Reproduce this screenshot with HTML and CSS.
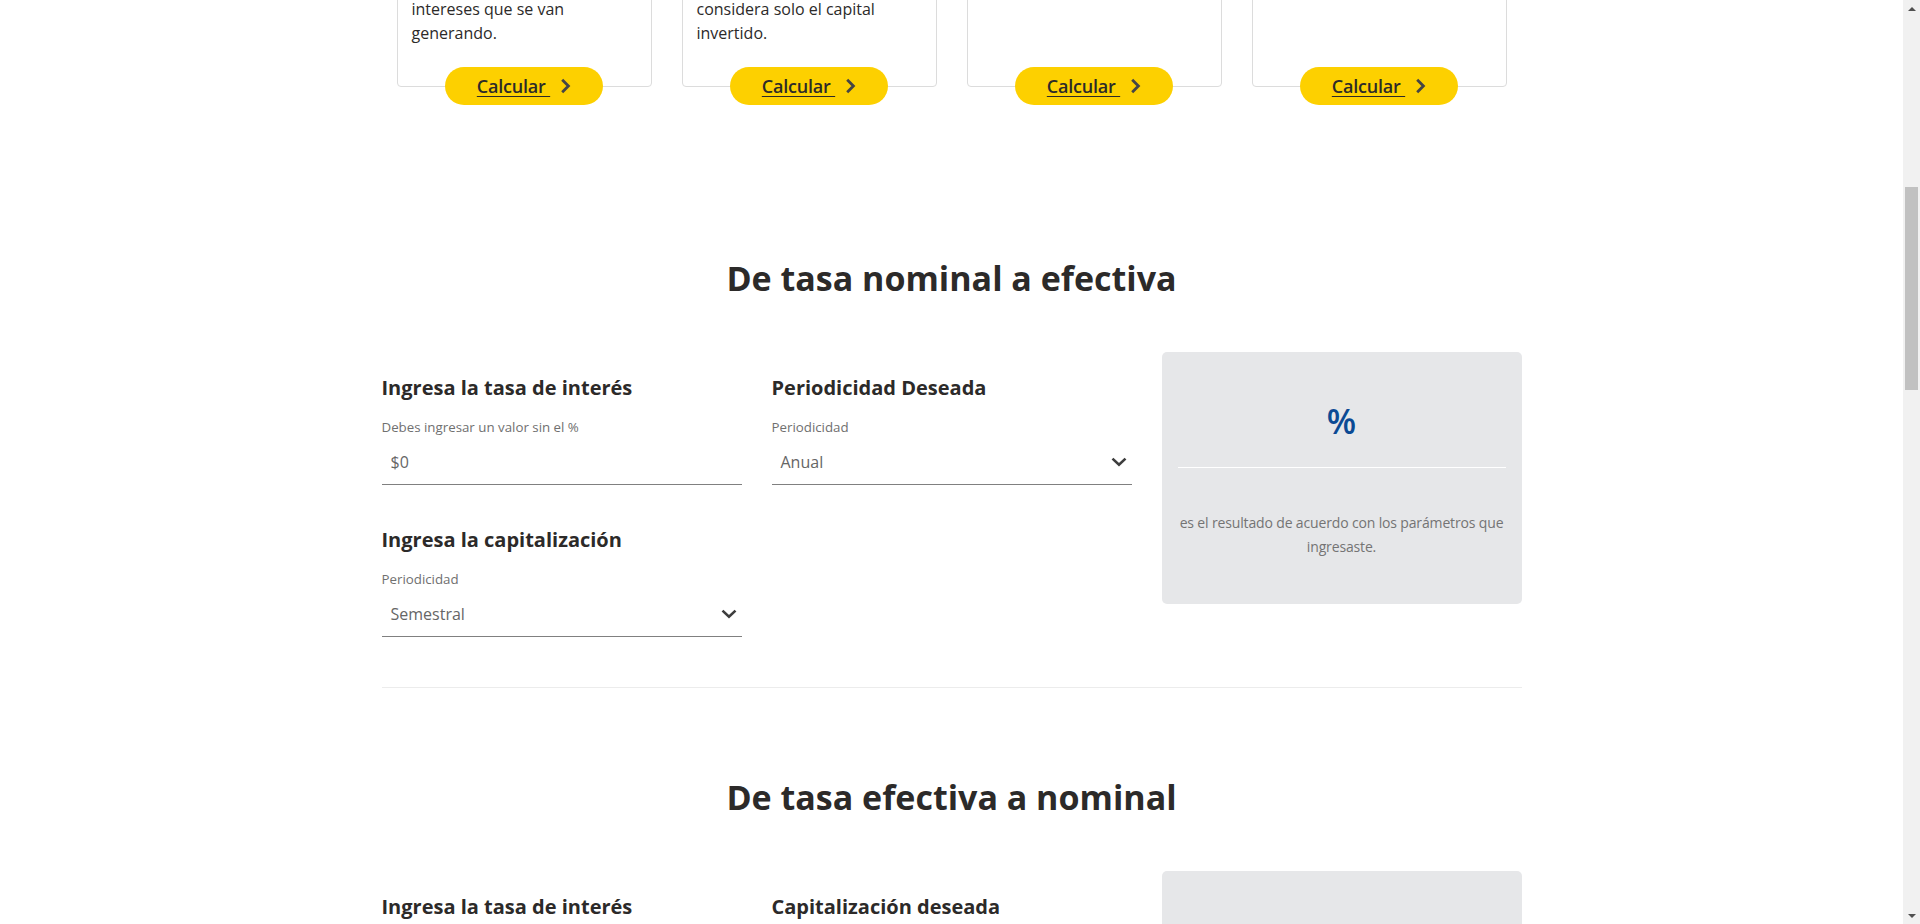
FILE: index.html
```html
<!DOCTYPE html>
<html lang="es">
<head>
<meta charset="utf-8">
<title>Calculadora de tasas</title>
<link rel="stylesheet" href="styles.css">
</head>
<body>
<div class="viewport">
  <main class="page">
    <section class="cards">
      <div class="card-item">
        <div class="card">
          <svg class="card-icon" width="40" height="40" viewBox="0 0 40 40"><circle cx="20" cy="20" r="16" fill="none" stroke="#2c2a29" stroke-width="2"/></svg>
          <h3 class="card-title">Interés compuesto</h3>
          <p class="card-text">Calcula el valor final de<br>tu inversión teniendo en<br>cuenta que se suman los<br>intereses que se van<br>generando.</p>
        </div>
        <a class="btn-calc" href="#"><span class="btn-label">Calcular&nbsp;</span><svg width="11" height="16" viewBox="0 0 11 16"><path d="M2.2 1.8L8.4 8l-6.2 6.2" fill="none" stroke="#454545" stroke-width="2.8"/></svg></a>
      </div>
      <div class="card-item">
        <div class="card">
          <svg class="card-icon" width="40" height="40" viewBox="0 0 40 40"><rect x="6" y="6" width="28" height="28" rx="3" fill="none" stroke="#2c2a29" stroke-width="2"/></svg>
          <h3 class="card-title">Interés simple</h3>
          <p class="card-text">Calcula el valor final de<br>tu inversión, este tipo<br>de interés solo<br>considera solo el capital<br>invertido.</p>
        </div>
        <a class="btn-calc" href="#"><span class="btn-label">Calcular&nbsp;</span><svg width="11" height="16" viewBox="0 0 11 16"><path d="M2.2 1.8L8.4 8l-6.2 6.2" fill="none" stroke="#454545" stroke-width="2.8"/></svg></a>
      </div>
      <div class="card-item">
        <div class="card">
          <svg class="card-icon" width="40" height="40" viewBox="0 0 40 40"><path d="M6 34V6h28" fill="none" stroke="#2c2a29" stroke-width="2"/></svg>
          <h3 class="card-title">Tasa nominal</h3>
          <p class="card-text">Convierte una tasa<br>nominal en efectiva<br>fácilmente.</p>
        </div>
        <a class="btn-calc" href="#"><span class="btn-label">Calcular&nbsp;</span><svg width="11" height="16" viewBox="0 0 11 16"><path d="M2.2 1.8L8.4 8l-6.2 6.2" fill="none" stroke="#454545" stroke-width="2.8"/></svg></a>
      </div>
      <div class="card-item">
        <div class="card">
          <svg class="card-icon" width="40" height="40" viewBox="0 0 40 40"><path d="M6 30l10-10 8 6 10-14" fill="none" stroke="#2c2a29" stroke-width="2"/></svg>
          <h3 class="card-title">Tasa efectiva</h3>
          <p class="card-text">Convierte una tasa<br>efectiva en nominal<br>fácilmente.</p>
        </div>
        <a class="btn-calc" href="#"><span class="btn-label">Calcular&nbsp;</span><svg width="11" height="16" viewBox="0 0 11 16"><path d="M2.2 1.8L8.4 8l-6.2 6.2" fill="none" stroke="#454545" stroke-width="2.8"/></svg></a>
      </div>
    </section>

    <section class="calc calc-divided">
      <h2 class="calc-title">De tasa nominal a efectiva</h2>
      <div class="calc-grid">
        <div class="calc-col">
          <div class="field">
            <h4 class="field-title">Ingresa la tasa de interés</h4>
            <div class="field-label">Debes ingresar un valor sin el %</div>
            <div class="field-input">$0</div>
          </div>
          <div class="field">
            <h4 class="field-title">Ingresa la capitalización</h4>
            <div class="field-label">Periodicidad</div>
            <div class="field-input field-select"><span>Semestral</span><svg width="16" height="10" viewBox="0 0 16 10"><path d="M1.5 1.6L8 7.8l6.5-6.2" fill="none" stroke="#3d3d3d" stroke-width="2.6"/></svg></div>
          </div>
        </div>
        <div class="calc-col">
          <div class="field">
            <h4 class="field-title">Periodicidad Deseada</h4>
            <div class="field-label">Periodicidad</div>
            <div class="field-input field-select"><span>Anual</span><svg width="16" height="10" viewBox="0 0 16 10"><path d="M1.5 1.6L8 7.8l6.5-6.2" fill="none" stroke="#3d3d3d" stroke-width="2.6"/></svg></div>
          </div>
        </div>
        <div class="result">
          <div class="result-value">%</div>
          <div class="result-rule"></div>
          <p class="result-text">es el resultado de acuerdo con los parámetros que ingresaste.</p>
        </div>
      </div>
    </section>

    <section class="calc">
      <h2 class="calc-title">De tasa efectiva a nominal</h2>
      <div class="calc-grid">
        <div class="calc-col">
          <div class="field">
            <h4 class="field-title">Ingresa la tasa de interés</h4>
            <div class="field-label">Debes ingresar un valor sin el %</div>
            <div class="field-input">$0</div>
          </div>
        </div>
        <div class="calc-col">
          <div class="field">
            <h4 class="field-title">Capitalización deseada</h4>
            <div class="field-label">Periodicidad</div>
            <div class="field-input field-select"><span>Mensual</span><svg width="16" height="10" viewBox="0 0 16 10"><path d="M1.5 1.6L8 7.8l6.5-6.2" fill="none" stroke="#3d3d3d" stroke-width="2.6"/></svg></div>
          </div>
        </div>
        <div class="result">
          <div class="result-value">%</div>
          <div class="result-rule"></div>
          <p class="result-text">es el resultado de acuerdo con los parámetros que ingresaste.</p>
        </div>
      </div>
    </section>
  </main>

  <div class="scrollbar">
    <div class="sb-btn"><span class="sb-arrow-up"></span></div>
    <div class="sb-track"><div class="sb-thumb"></div></div>
    <div class="sb-btn"><span class="sb-arrow-down"></span></div>
  </div>
</div>
</body>
</html>
```

FILE: styles.css
```css
html, body {
  margin: 0;
  padding: 0;
  height: 100%;
  overflow: hidden;
  background: #ffffff;
}

body {
  font-family: "Open Sans", "Liberation Sans", sans-serif;
  color: #2c2a29;
}

.viewport {
  display: flex;
  height: 100vh;
}

.page {
  flex: 1;
  min-width: 0;
  overflow: hidden;
}

/* ---------- cards ---------- */
.cards {
  width: 1110px;
  margin: -200px auto 64px;
  display: grid;
  grid-template-columns: repeat(4, 1fr);
  column-gap: 30px;
}

.card-item {
  display: flex;
  flex-direction: column;
  align-items: center;
}

.card {
  align-self: stretch;
  height: 287px;
  box-sizing: border-box;
  border: 1px solid #dcdcdc;
  border-radius: 4px;
  padding: 32px 14px 0;
}

.card-icon {
  display: block;
  margin-bottom: 16px;
}

.card-title {
  margin: 0 0 8px;
  font-size: 20px;
  line-height: 28px;
  font-weight: 700;
}

.card-text {
  margin: 0;
  font-size: 16px;
  line-height: 24px;
  color: #2c2a29;
}

.btn-calc {
  margin-top: -20px;
  width: 158px;
  height: 38px;
  box-sizing: border-box;
  border-radius: 19px;
  background: #fdd000;
  display: flex;
  align-items: center;
  justify-content: center;
  gap: 10px;
  text-decoration: none;
  color: #2c2a29;
}

.btn-label {
  font-size: 18px;
  font-weight: 600;
  letter-spacing: -0.2px;
  text-decoration: underline;
  text-underline-offset: 3px;
}

/* ---------- calculators ---------- */
.calc {
  width: 1140px;
  margin: 0 auto;
  padding: 85px 0 50px;
}

.calc-divided {
  border-bottom: 1px solid #ececec;
}

.calc-title {
  margin: 0 0 50px;
  text-align: center;
  font-size: 34px;
  line-height: 48px;
  font-weight: 700;
  color: #2c2a29;
}

.calc-grid {
  display: grid;
  grid-template-columns: repeat(3, 1fr);
  column-gap: 30px;
  align-items: start;
}

.calc-col {
  padding-top: 21px;
}

.field + .field {
  margin-top: 40px;
}

.field-title {
  margin: 0 0 15px;
  font-size: 20px;
  line-height: 30px;
  font-weight: 700;
  color: #2c2a29;
}

.field-label {
  margin-bottom: 6px;
  font-size: 13.3px;
  line-height: 19px;
  color: #707070;
}

.field-input {
  padding: 7px 9px 10px;
  border-bottom: 1px solid #808080;
  font-size: 16px;
  line-height: 24px;
  color: #666666;
}

.field-select {
  display: flex;
  align-items: center;
  justify-content: space-between;
  padding-right: 5px;
}

.result {
  background: #e6e7e9;
  border-radius: 5px;
  padding: 45px 13px;
  text-align: center;
}

.result-value {
  font-size: 34px;
  line-height: 48px;
  font-weight: 600;
  color: #0b4a94;
}

.result-rule {
  height: 1px;
  background: #ffffff;
  margin: 22px 3px 43px;
}

.result-text {
  margin: 0;
  font-size: 14px;
  line-height: 24px;
  letter-spacing: -0.15px;
  color: #747474;
}

/* ---------- fake scrollbar ---------- */
.scrollbar {
  width: 17px;
  flex: none;
  background: #f1f1f1;
  display: flex;
  flex-direction: column;
}

.sb-btn {
  height: 17px;
  display: flex;
  align-items: center;
  justify-content: center;
}

.sb-arrow-up {
  width: 0;
  height: 0;
  border-left: 4px solid transparent;
  border-right: 4px solid transparent;
  border-bottom: 4px solid #505050;
}

.sb-arrow-down {
  width: 0;
  height: 0;
  border-left: 4px solid transparent;
  border-right: 4px solid transparent;
  border-top: 4px solid #505050;
}

.sb-track {
  flex: 1;
  padding: 0 2px;
}

.sb-thumb {
  margin-top: 170px;
  height: 203px;
  background: #c1c1c1;
}
```
